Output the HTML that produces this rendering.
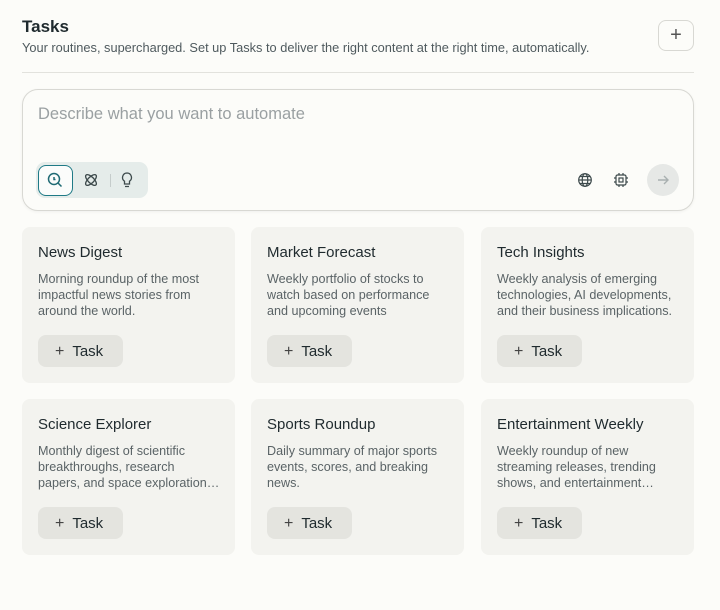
<!DOCTYPE html>
<html><head><style>
*{box-sizing:border-box;margin:0;padding:0}
body{width:720px;height:610px;background:#fcfcf9;font-family:"Liberation Sans",sans-serif;color:#1f2a2e;position:relative;overflow:hidden}
.abs{position:absolute}
.card{position:absolute;width:213px;height:156px;background:#f3f3ef;border-radius:8px}
.card h3{position:absolute;left:16px;top:17px;font-size:15px;font-weight:normal;color:#1f2a2e}
.card p{position:absolute;left:16px;top:44px;width:190px;font-size:12.6px;line-height:16px;color:#5a6366;white-space:nowrap}
.card .btn{position:absolute;left:16px;top:108px;width:85px;height:32px;background:#e4e4df;border-radius:8px;font-size:15px;color:#1f2a2e;line-height:33px;padding-left:17px}
.card .btn span{font-size:16px;margin-right:8px;color:#444}
</style></head><body>
<div class="abs" style="left:22px;top:17px;font-size:17px;font-weight:bold;color:#1f2a2e">Tasks</div>
<div class="abs" style="left:22px;top:40px;font-size:12.8px;color:#4f5a5e">Your routines, supercharged. Set up Tasks to deliver the right content at the right time, automatically.</div>
<div class="abs" style="left:658px;top:20px;width:36px;height:31px;border:1px solid #d8d8d3;border-radius:8px;background:#fcfcf9;text-align:center;line-height:28px;font-size:20px;color:#555">+</div>
<div class="abs" style="left:22px;top:72px;width:672px;height:1px;background:#e2e2dd"></div>
<div class="abs" style="left:22px;top:89px;width:672px;height:122px;border:1px solid #d8d8d3;border-radius:16px;background:#fcfcf9;box-shadow:0 1px 3px rgba(0,0,0,.05)">
 <div class="abs" style="left:15px;top:15px;font-size:16.5px;color:#9aa0a2">Describe what you want to automate</div>
 <div class="abs" style="left:13px;top:72px;width:112px;height:36px;background:#e5ecea;border-radius:9px"></div>
 <div class="abs" style="left:15px;top:75px;width:35px;height:31px;border:1.5px solid #1f7a86;border-radius:8px;background:#fbfcfb">
  <svg width="32" height="28" viewBox="0 0 32 28"><circle cx="15" cy="13" r="5.5" fill="none" stroke="#1f6a74" stroke-width="1.5"/><path d="M19 17l3.5 3.5M15 11v2.5h1.5" stroke="#1f6a74" stroke-width="1.5" fill="none"/></svg>
 </div>
 <svg class="abs" style="left:59px;top:81px" width="18" height="18" viewBox="0 0 18 18"><g fill="none" stroke="#3d4a4c" stroke-width="1.3"><ellipse cx="9" cy="9" rx="7" ry="3" transform="rotate(45 9 9)"/><ellipse cx="9" cy="9" rx="7" ry="3" transform="rotate(-45 9 9)"/></g></svg>
 <div class="abs" style="left:87px;top:84px;width:1px;height:13px;background:#c5cccb"></div>
 <svg class="abs" style="left:96px;top:81px" width="16" height="18" viewBox="0 0 16 18"><path d="M8 2a4.5 4.5 0 0 0-2.5 8.2V13h5v-2.8A4.5 4.5 0 0 0 8 2zM6 15.5h4" fill="none" stroke="#3d4a4c" stroke-width="1.3"/></svg>
 <svg class="abs" style="left:554px;top:82px" width="16" height="16" viewBox="0 0 16 16"><g fill="none" stroke="#3d4a4c" stroke-width="1.2"><circle cx="8" cy="8" r="6.3"/><ellipse cx="8" cy="8" rx="2.8" ry="6.3"/><path d="M1.7 8h12.6M3 4.5h10M3 11.5h10"/></g></svg>
 <svg class="abs" style="left:590px;top:82px" width="16" height="16" viewBox="0 0 16 16"><g fill="none" stroke="#3d4a4c" stroke-width="1.2"><rect x="3" y="3" width="10" height="10" rx="1.5"/><rect x="6" y="6" width="4" height="4"/><path d="M6 1v2M10 1v2M6 13v2M10 13v2M1 6h2M1 10h2M13 6h2M13 10h2"/></g></svg>
 <div class="abs" style="left:624px;top:74px;width:32px;height:32px;border-radius:50%;background:#e6e8e6"><svg width="32" height="32" viewBox="0 0 32 32"><path d="M11 16h10M17 12l4 4-4 4" fill="none" stroke="#a9b0b0" stroke-width="1.4"/></svg></div>
</div>

<div class="card" style="left:22px;top:227px"><h3>News Digest</h3><p>Morning roundup of the most<br>impactful news stories from<br>around the world.</p><div class="btn"><span>+</span>Task</div></div>
<div class="card" style="left:251px;top:227px"><h3>Market Forecast</h3><p>Weekly portfolio of stocks to<br>watch based on performance<br>and upcoming events</p><div class="btn"><span>+</span>Task</div></div>
<div class="card" style="left:481px;top:227px"><h3>Tech Insights</h3><p>Weekly analysis of emerging<br>technologies, AI developments,<br>and their business implications.</p><div class="btn"><span>+</span>Task</div></div>
<div class="card" style="left:22px;top:399px"><h3>Science Explorer</h3><p>Monthly digest of scientific<br>breakthroughs, research<br>papers, and space exploration…</p><div class="btn"><span>+</span>Task</div></div>
<div class="card" style="left:251px;top:399px"><h3>Sports Roundup</h3><p>Daily summary of major sports<br>events, scores, and breaking<br>news.</p><div class="btn"><span>+</span>Task</div></div>
<div class="card" style="left:481px;top:399px"><h3>Entertainment Weekly</h3><p>Weekly roundup of new<br>streaming releases, trending<br>shows, and entertainment…</p><div class="btn"><span>+</span>Task</div></div>
</body></html>
